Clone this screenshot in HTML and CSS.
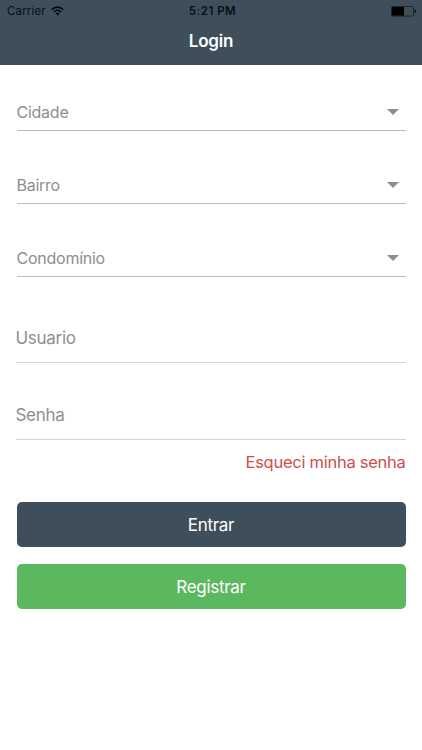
FILE: index.html
```html
<!DOCTYPE html>
<html lang="pt-BR">
<head>
  <meta charset="UTF-8">
  <meta name="viewport" content="width=device-width, initial-scale=1.0">
  <title>Login</title>
  <link rel="stylesheet" href="styles.css">
</head>
<body>
  <header class="header">
    <div class="status-bar">
      <div class="carrier">
        <span class="carrier-name">Carrier</span>
        <svg class="wifi" width="13" height="10" viewBox="0 0 13 10">
          <path d="M0.8 3.6 Q6.5 -1.4 12.2 3.6" fill="none" stroke="#000" stroke-width="1.5"/>
          <path d="M2.9 5.9 Q6.5 2.7 10.1 5.9" fill="none" stroke="#000" stroke-width="1.4"/>
          <path d="M4.5 7.3 Q6.5 5.7 8.5 7.3 L6.5 9.4 Z" fill="#000"/>
        </svg>
      </div>
      <div class="time">5:21 PM</div>
      <svg class="battery" width="25" height="11" viewBox="0 0 25 11">
        <rect x="0.5" y="0.5" width="22" height="9.6" rx="1" fill="none" stroke="#1c252c"/>
        <rect x="1" y="1" width="12" height="8.6" fill="#000"/>
        <path d="M23.4 3.6 h0.8 q0.8 0 0.8 0.8 v1.6 q0 0.8 -0.8 0.8 h-0.8 z" fill="#10161a"/>
      </svg>
    </div>
    <h1 class="title">Login</h1>
  </header>

  <form class="login-form">
    <div class="select-field">
      <span class="cidade">Cidade</span>
      <span class="arrow"></span>
    </div>
    <div class="select-field">
      <span class="bairro">Bairro</span>
      <span class="arrow"></span>
    </div>
    <div class="select-field">
      <span class="condominio">Condomínio</span>
      <span class="arrow"></span>
    </div>

    <input class="text-field usuario" type="text" placeholder="Usuario">
    <input class="text-field senha" type="password" placeholder="Senha">

    <a class="forgot-link">Esqueci minha senha</a>

    <button class="btn btn-entrar" type="button">Entrar</button>
    <button class="btn btn-registrar" type="button">Registrar</button>
  </form>
</body>
</html>
```
FILE: styles.css
```css
* {
  box-sizing: border-box;
}

body {
  margin: 0;
  background-color: #fff;
  font-family: Inter, "Liberation Sans", sans-serif;
}

.header {
  height: 65px;
  background-color: #3e4f5b;
}

.status-bar {
  display: grid;
  grid-template-columns: 1fr auto 1fr;
  align-items: center;
  height: 22px;
  padding: 0 6px 0 7px;
  font-size: 11.5px;
  line-height: 22px;
  color: #0a0e11;
}

.carrier {
  display: flex;
  align-items: center;
  gap: 5px;
}

.carrier-name {
  letter-spacing: 0.15px;
}

.time {
  padding-left: 2px;
  font-size: 11.5px;
  font-weight: 600;
  letter-spacing: 0.5px;
}

.battery {
  justify-self: end;
}

.title {
  margin: 0;
  font-size: 17px;
  font-weight: 600;
  line-height: 38px;
  letter-spacing: -0.2px;
  text-align: center;
  color: #fff;
}

.login-form {
  display: flex;
  flex-direction: column;
  padding: 28.5px 16.5px 0;
}

.select-field {
  display: flex;
  align-items: center;
  justify-content: space-between;
  height: 37.3px;
  margin-bottom: 36px;
  padding-right: 6.5px;
  border-bottom: 1px solid #bdbdbd;
  font-size: 16px;
  letter-spacing: -0.25px;
  color: #8e8e8e;
}

.arrow {
  border-left: 6px solid transparent;
  border-right: 6px solid transparent;
  border-top: 6px solid #8e8e8e;
}

.text-field {
  height: 49px;
  margin: 0 0 28px -1px;
  padding: 0;
  border: 0;
  border-bottom: 1px solid #d5d5d5;
  background: none;
  outline: none;
  font-family: inherit;
  font-size: 17px;
  letter-spacing: -0.3px;
}

.text-field::placeholder {
  color: #8e8e8e;
}

.usuario {
  margin-top: 0.6px;
}

.senha {
  margin-bottom: 12.5px;
}

.forgot-link {
  align-self: flex-end;
  margin-bottom: 28.5px;
  font-size: 16.5px;
  line-height: 21px;
  letter-spacing: -0.27px;
  color: #cd4f4c;
}

.btn {
  height: 45.5px;
  margin: 0 0 16.5px;
  padding: 0;
  border: 0;
  border-radius: 5px;
  font-family: inherit;
  font-size: 17px;
  letter-spacing: -0.3px;
  color: #fff;
}

.btn-entrar {
  background-color: #3e4f5b;
}

.btn-registrar {
  background-color: #5cb85f;
}
```
